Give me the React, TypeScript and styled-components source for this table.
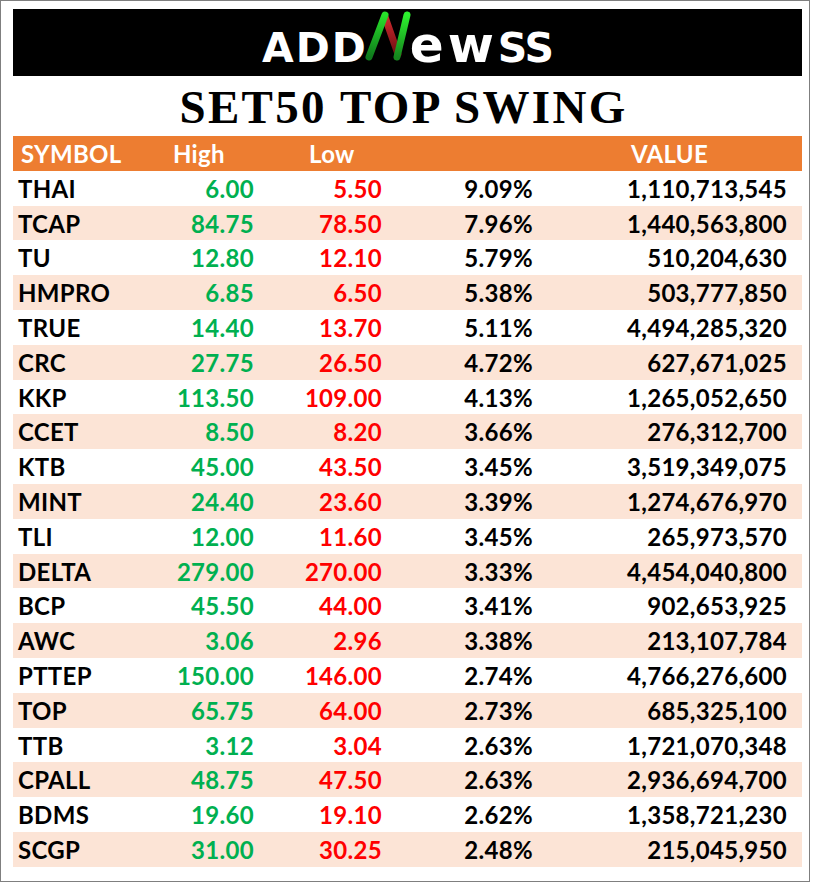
import React from "react"
import styled, { createGlobalStyle } from "styled-components"

const GlobalStyle = createGlobalStyle`
	html, body {
		margin: 0;
		padding: 0;
		background: #ffffff;
	}
`

type Quote = {
	symbol: string
	high: string
	low: string
	swing: string
	value: string
}

const quotes: Quote[] = [
	{ symbol: "THAI", high: "6.00", low: "5.50", swing: "9.09%", value: "1,110,713,545" },
	{ symbol: "TCAP", high: "84.75", low: "78.50", swing: "7.96%", value: "1,440,563,800" },
	{ symbol: "TU", high: "12.80", low: "12.10", swing: "5.79%", value: "510,204,630" },
	{ symbol: "HMPRO", high: "6.85", low: "6.50", swing: "5.38%", value: "503,777,850" },
	{ symbol: "TRUE", high: "14.40", low: "13.70", swing: "5.11%", value: "4,494,285,320" },
	{ symbol: "CRC", high: "27.75", low: "26.50", swing: "4.72%", value: "627,671,025" },
	{ symbol: "KKP", high: "113.50", low: "109.00", swing: "4.13%", value: "1,265,052,650" },
	{ symbol: "CCET", high: "8.50", low: "8.20", swing: "3.66%", value: "276,312,700" },
	{ symbol: "KTB", high: "45.00", low: "43.50", swing: "3.45%", value: "3,519,349,075" },
	{ symbol: "MINT", high: "24.40", low: "23.60", swing: "3.39%", value: "1,274,676,970" },
	{ symbol: "TLI", high: "12.00", low: "11.60", swing: "3.45%", value: "265,973,570" },
	{ symbol: "DELTA", high: "279.00", low: "270.00", swing: "3.33%", value: "4,454,040,800" },
	{ symbol: "BCP", high: "45.50", low: "44.00", swing: "3.41%", value: "902,653,925" },
	{ symbol: "AWC", high: "3.06", low: "2.96", swing: "3.38%", value: "213,107,784" },
	{ symbol: "PTTEP", high: "150.00", low: "146.00", swing: "2.74%", value: "4,766,276,600" },
	{ symbol: "TOP", high: "65.75", low: "64.00", swing: "2.73%", value: "685,325,100" },
	{ symbol: "TTB", high: "3.12", low: "3.04", swing: "2.63%", value: "1,721,070,348" },
	{ symbol: "CPALL", high: "48.75", low: "47.50", swing: "2.63%", value: "2,936,694,700" },
	{ symbol: "BDMS", high: "19.60", low: "19.10", swing: "2.62%", value: "1,358,721,230" },
	{ symbol: "SCGP", high: "31.00", low: "30.25", swing: "2.48%", value: "215,045,950" },
]

const Frame = styled.div`
	width: 810px;
	height: 882px;
	box-sizing: border-box;
	border: 1px solid #7f7f7f;
	padding: 8px 7px 0 12px;
	background: #ffffff;
	display: flex;
	flex-direction: column;
`

const Banner = styled.div`
	height: 67px;
	background: #000000;
	display: flex;
	justify-content: center;
	align-items: center;
`

const Logo = styled.div`
	display: flex;
	align-items: baseline;
	padding-bottom: 5px;
	color: #ffffff;
	font-family: "DejaVu Sans", "Noto Sans", sans-serif;
	font-weight: 700;
	line-height: 1;
`

const LogoWord = styled.span<{ $size: number; $spacing: number }>`
	font-size: ${({ $size }) => $size}px;
	letter-spacing: ${({ $spacing }) => $spacing}px;
`

const LogoMark = styled.svg`
	width: 48px;
	height: 52px;
	margin: 0 -1px -10px -5px;
	flex-shrink: 0;
`

const Title = styled.h1`
	margin: 0;
	height: 60px;
	line-height: 62px;
	text-align: center;
	padding-right: 8px;
	font-family: "Liberation Serif", "Times New Roman", serif;
	font-weight: 700;
	font-size: 47px;
	letter-spacing: 2.3px;
	color: #000000;
`

const Table = styled.div`
	display: flex;
	flex-direction: column;
	font-family: Lato, "Open Sans", sans-serif;
	font-weight: 700;
	font-size: 24px;
	letter-spacing: 0.3px;
`

const Row = styled.div<{ $striped?: boolean; $head?: boolean }>`
	display: grid;
	grid-template-columns: 132px 104px 128px 151px 254px;
	height: 34.8px;
	box-sizing: border-box;
	padding: 2px 15px 0 5px;
	line-height: 32.8px;
	white-space: nowrap;
	background: ${({ $striped, $head }) => ($head ? "#ed7d31" : $striped ? "#fce4d6" : "#ffffff")};
	color: ${({ $head }) => ($head ? "#ffffff" : "#000000")};
`

const HeadCell = styled.div<{ $indent: number }>`
	padding-left: ${({ $indent }) => $indent}px;
`

const Cell = styled.div<{ $tone?: "up" | "down"; $right?: boolean }>`
	text-align: ${({ $right }) => ($right ? "right" : "left")};
	color: ${({ $tone }) => ($tone === "up" ? "#00b050" : $tone === "down" ? "#ff0000" : "#000000")};
`

const NMark = () => (
	<LogoMark viewBox="0 0 48 52">
		<defs>
			<linearGradient id="greenL" x1="0" y1="1" x2="0" y2="0">
				<stop offset="0" stopColor="#0f7a1c" />
				<stop offset="1" stopColor="#27e02a" />
			</linearGradient>
			<linearGradient id="greenR" x1="0" y1="1" x2="0" y2="0">
				<stop offset="0" stopColor="#16861e" />
				<stop offset="1" stopColor="#2cf02e" />
			</linearGradient>
			<linearGradient id="red" x1="0" y1="0" x2="0" y2="1">
				<stop offset="0" stopColor="#d02a2e" />
				<stop offset="1" stopColor="#6e0e12" />
			</linearGradient>
		</defs>
		<line x1="22" y1="7" x2="35" y2="44" stroke="url(#red)" strokeWidth="7" strokeLinecap="round" />
		<line x1="6" y1="47" x2="22" y2="5" stroke="url(#greenL)" strokeWidth="7" strokeLinecap="round" />
		<line x1="34" y1="47" x2="44" y2="5" stroke="url(#greenR)" strokeWidth="7" strokeLinecap="round" />
	</LogoMark>
)

export default function App() {
	return (
		<>
			<GlobalStyle />
			<Frame>
				<Banner>
					<Logo>
						<LogoWord $size={41} $spacing={2}>ADD</LogoWord>
						<NMark />
						<LogoWord $size={50} $spacing={4}>ew</LogoWord>
						<LogoWord $size={41} $spacing={-1}>SS</LogoWord>
					</Logo>
				</Banner>
				<Title>SET50 TOP SWING</Title>
				<Table>
					<Row $head>
						<HeadCell $indent={3}>SYMBOL</HeadCell>
						<HeadCell $indent={23}>High</HeadCell>
						<HeadCell $indent={55}>Low</HeadCell>
						<HeadCell $indent={0}></HeadCell>
						<HeadCell $indent={98}>VALUE</HeadCell>
					</Row>
					{quotes.map((q, i) => (
						<Row key={q.symbol} $striped={i % 2 === 1}>
							<Cell>{q.symbol}</Cell>
							<Cell $right $tone="up">{q.high}</Cell>
							<Cell $right $tone="down">{q.low}</Cell>
							<Cell $right>{q.swing}</Cell>
							<Cell $right>{q.value}</Cell>
						</Row>
					))}
				</Table>
			</Frame>
		</>
	)
}
